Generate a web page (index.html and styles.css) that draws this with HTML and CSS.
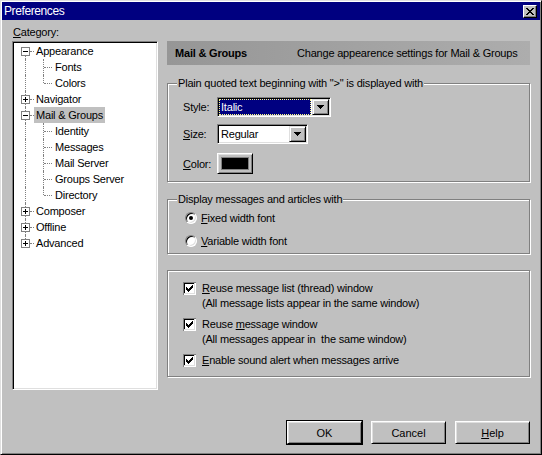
FILE: index.html
```html
<!DOCTYPE html>
<html>
<head>
<meta charset="utf-8">
<title>Preferences</title>
<link rel="stylesheet" href="styles.css">
</head>
<body>
<div class="window">
  <div class="titlebar">
    <span class="title">Preferences</span>
    <span class="close"><svg width="8" height="7" viewBox="0 0 8 7"><path d="M0 0h2v1H0z M6 0h2v1H6z M1 1h2v1H1z M5 1h2v1H5z M2 2h4v1H2z M3 3h2v1H3z M2 4h4v1H2z M1 5h2v1H1z M5 5h2v1H5z M0 6h2v1H0z M6 6h2v1H6z" fill="#000"/></svg></span>
  </div>
  <div class="main">
    <div class="left">
      <div class="cat-label"><u>C</u>ategory:</div>
      <div class="tree">
        <div class="row l0"><i class="vr first"></i><i class="hr"></i><svg class="box" width="9" height="9"><rect x="0.5" y="0.5" width="8" height="8" fill="#fff" stroke="#808080"/><path d="M2 4h5v1H2z" fill="#000"/></svg><span class="lbl">Appearance</span></div>
        <div class="row l1"><i class="vr"></i><i class="vc"></i><i class="hc"></i><span class="lbl">Fonts</span></div>
        <div class="row l1"><i class="vr"></i><i class="vc last"></i><i class="hc"></i><span class="lbl">Colors</span></div>
        <div class="row l0"><i class="vr"></i><i class="hr"></i><svg class="box" width="9" height="9"><rect x="0.5" y="0.5" width="8" height="8" fill="#fff" stroke="#808080"/><path d="M2 4h5v1H2z M4 2h1v5H4z" fill="#000"/></svg><span class="lbl">Navigator</span></div>
        <div class="row l0"><i class="vr"></i><i class="hr"></i><svg class="box" width="9" height="9"><rect x="0.5" y="0.5" width="8" height="8" fill="#fff" stroke="#808080"/><path d="M2 4h5v1H2z" fill="#000"/></svg><span class="lbl sel">Mail &amp; Groups</span></div>
        <div class="row l1"><i class="vr"></i><i class="vc"></i><i class="hc"></i><span class="lbl">Identity</span></div>
        <div class="row l1"><i class="vr"></i><i class="vc"></i><i class="hc"></i><span class="lbl">Messages</span></div>
        <div class="row l1"><i class="vr"></i><i class="vc"></i><i class="hc"></i><span class="lbl">Mail Server</span></div>
        <div class="row l1"><i class="vr"></i><i class="vc"></i><i class="hc"></i><span class="lbl">Groups Server</span></div>
        <div class="row l1"><i class="vr"></i><i class="vc last"></i><i class="hc"></i><span class="lbl">Directory</span></div>
        <div class="row l0"><i class="vr"></i><i class="hr"></i><svg class="box" width="9" height="9"><rect x="0.5" y="0.5" width="8" height="8" fill="#fff" stroke="#808080"/><path d="M2 4h5v1H2z M4 2h1v5H4z" fill="#000"/></svg><span class="lbl">Composer</span></div>
        <div class="row l0"><i class="vr"></i><i class="hr"></i><svg class="box" width="9" height="9"><rect x="0.5" y="0.5" width="8" height="8" fill="#fff" stroke="#808080"/><path d="M2 4h5v1H2z M4 2h1v5H4z" fill="#000"/></svg><span class="lbl">Offline</span></div>
        <div class="row l0"><i class="vr last"></i><i class="hr"></i><svg class="box" width="9" height="9"><rect x="0.5" y="0.5" width="8" height="8" fill="#fff" stroke="#808080"/><path d="M2 4h5v1H2z M4 2h1v5H4z" fill="#000"/></svg><span class="lbl">Advanced</span></div>
      </div>
    </div>
    <div class="right">
      <div class="header">
        <span class="h-title">Mail &amp; Groups</span>
        <span class="h-desc">Change appearence settings for Mail &amp; Groups</span>
      </div>

      <div class="group g1">
        <div class="legend">Plain quoted text beginning with "&gt;" is displayed with</div>
        <div class="frow r1">
          <span class="flabel">Style:</span>
          <div class="select w-style">
            <span class="value hl"><span class="focus">Italic</span></span>
            <span class="drop"><svg width="7" height="4" viewBox="0 0 7 4"><path d="M0 0h7v1H6v1H5v1H4v1H3V3H2V2H1V1H0z" fill="#000"/></svg></span>
          </div>
        </div>
        <div class="frow r2">
          <span class="flabel"><u>S</u>ize:</span>
          <div class="select w-size">
            <span class="value">Regular</span>
            <span class="drop"><svg width="7" height="4" viewBox="0 0 7 4"><path d="M0 0h7v1H6v1H5v1H4v1H3V3H2V2H1V1H0z" fill="#000"/></svg></span>
          </div>
        </div>
        <div class="frow r3">
          <span class="flabel"><u>C</u>olor:</span>
          <span class="colorbtn"><span class="swatch"></span></span>
        </div>
      </div>

      <div class="group g2">
        <div class="legend">Display messages and articles with</div>
        <div class="rrow first"><span class="radio on"></span><span><u>F</u>ixed width font</span></div>
        <div class="rrow"><span class="radio"></span><span><u>V</u>ariable width font</span></div>
      </div>

      <div class="group g3">
        <div class="cb">
          <svg class="check" width="13" height="13" viewBox="0 0 13 13"><rect width="13" height="13" fill="#fff"/><path d="M0 0h13v1H0z M0 0h1v13H0z" fill="#808080"/><path d="M1 1h11v1H1z M1 1h1v11H1z" fill="#000"/><path d="M1 11h11v1H1z M11 1h1v11h-1z" fill="#dfdfdf"/><path d="M3 5h1v3H3z M4 6h1v3H4z M5 7h1v3H5z M6 6h1v3H6z M7 5h1v3H7z M8 4h1v3H8z M9 3h1v3H9z" fill="#000"/></svg>
          <div class="cbtext"><u>R</u>euse message list (thread) window<br>(All message lists appear in the same window)</div>
        </div>
        <div class="cb">
          <svg class="check" width="13" height="13" viewBox="0 0 13 13"><rect width="13" height="13" fill="#fff"/><path d="M0 0h13v1H0z M0 0h1v13H0z" fill="#808080"/><path d="M1 1h11v1H1z M1 1h1v11H1z" fill="#000"/><path d="M1 11h11v1H1z M11 1h1v11h-1z" fill="#dfdfdf"/><path d="M3 5h1v3H3z M4 6h1v3H4z M5 7h1v3H5z M6 6h1v3H6z M7 5h1v3H7z M8 4h1v3H8z M9 3h1v3H9z" fill="#000"/></svg>
          <div class="cbtext">Reuse <u>m</u>essage window<br>(All messages appear in&nbsp; the same window)</div>
        </div>
        <div class="cb">
          <svg class="check" width="13" height="13" viewBox="0 0 13 13"><rect width="13" height="13" fill="#fff"/><path d="M0 0h13v1H0z M0 0h1v13H0z" fill="#808080"/><path d="M1 1h11v1H1z M1 1h1v11H1z" fill="#000"/><path d="M1 11h11v1H1z M11 1h1v11h-1z" fill="#dfdfdf"/><path d="M3 5h1v3H3z M4 6h1v3H4z M5 7h1v3H5z M6 6h1v3H6z M7 5h1v3H7z M8 4h1v3H8z M9 3h1v3H9z" fill="#000"/></svg>
          <div class="cbtext"><u>E</u>nable sound alert when messages arrive</div>
        </div>
      </div>
    </div>
  </div>
  <div class="buttons">
    <span class="btn default">OK</span>
    <span class="btn">Cancel</span>
    <span class="btn"><span><u>H</u>elp</span></span>
  </div>
</div>
</body>
</html>
```

FILE: styles.css
```css
* { box-sizing: border-box; }

body {
  margin: 0;
  background: #c0c0c0;
  font: 11px/14px "Liberation Sans", Arial, sans-serif;
  letter-spacing: -0.2px;
  color: #000;
}

u { text-decoration: underline; text-underline-offset: 1px; }

.window {
  width: 542px;
  height: 455px;
  background: #c0c0c0;
  border: 1px solid;
  border-color: #dfdfdf #000 #000 #dfdfdf;
  box-shadow: inset 1px 1px 0 #fff, inset -1px -1px 0 #808080;
  padding: 1px;
  display: flex;
  flex-direction: column;
}

/* title bar */
.titlebar {
  height: 18px;
  background: #000080;
  color: #fff;
  display: flex;
  align-items: center;
  padding: 0 3px 0 2px;
}
.title {
  flex: 1;
  font-size: 12px;
  letter-spacing: -0.4px;
}
.close {
  width: 14px;
  height: 13px;
  background: #c0c0c0;
  border: 1px solid;
  border-color: #fff #000 #000 #fff;
  box-shadow: inset -1px -1px 0 #808080;
  display: flex;
  align-items: center;
  justify-content: center;
  padding-right: 1px;
}
.close svg { display: block; }

/* main area */
.main {
  display: flex;
  padding-left: 10px;
}
.left { width: 146px; }
.cat-label {
  height: 21px;
  padding: 5px 0 0 1px;
  line-height: 14px;
}
.tree {
  height: 349px;
  background: #fff;
  border: 1px solid;
  border-color: #808080 #fff #fff #808080;
  box-shadow: inset 1px 1px 0 #000, inset -1px -1px 0 #dfdfdf;
  padding-top: 1px;
}
.row {
  position: relative;
  height: 16px;
  line-height: 16px;
}
.row i { position: absolute; display: block; }
.vr {
  left: 12px;
  top: 0;
  height: 16px;
  border-left: 1px dotted #808080;
}
.vr.first { top: 8px; height: 8px; }
.vr.last { height: 8px; }
.hr {
  left: 17px;
  top: 8px;
  width: 4px;
  border-top: 1px dotted #808080;
}
.vc {
  left: 30px;
  top: 0;
  height: 16px;
  border-left: 1px dotted #808080;
}
.vc.last { height: 8px; }
.hc {
  left: 31px;
  top: 8px;
  width: 8px;
  border-top: 1px dotted #808080;
}
.box {
  position: absolute;
  left: 8px;
  top: 4px;
  display: block;
}
.lbl {
  display: inline-block;
  padding: 0 2px;
  height: 16px;
  line-height: 16px;
}
.l0 .lbl { margin-left: 21px; }
.l1 .lbl { margin-left: 40px; }
.lbl.sel { background: #c0c0c0; }

.right {
  width: 364px;
  margin-left: 9px;
  padding-top: 21px;
}
.header {
  height: 24px;
  width: 363px;
  display: flex;
  align-items: center;
  background: linear-gradient(to right, #969696, #adadad);
}
.h-title {
  width: 130px;
  padding-left: 8px;
  font-weight: bold;
  flex: none;
}

/* group boxes */
.group {
  width: 363px;
  border: 1px solid #808080;
  box-shadow: 1px 1px 0 #fff, inset 1px 1px 0 #fff;
}
.legend {
  display: block;
  width: fit-content;
  margin: -8px 0 0 9px;
  padding: 0 1px;
  background: #c0c0c0;
  line-height: 14px;
  height: 14px;
}
.g1 { margin-top: 18px; height: 99px; }
.g2 { margin-top: 17px; height: 55px; }
.g3 { margin-top: 16px; height: 107px; padding-top: 10px; }

.frow {
  display: flex;
  align-items: center;
  padding-left: 15px;
}
.frow.r1 { margin-top: 7px; }
.frow.r2 { margin-top: 7px; }
.frow.r3 { margin-top: 9px; }
.flabel { width: 34px; flex: none; }

.select {
  height: 20px;
  background: #fff;
  border: 1px solid;
  border-color: #808080 #fff #fff #808080;
  box-shadow: inset 1px 1px 0 #000, inset -1px -1px 0 #dfdfdf;
  padding: 1px;
  display: flex;
}
.w-style { width: 114px; }
.w-size { width: 91px; }
.value {
  flex: 1;
  line-height: 16px;
  padding-left: 2px;
  margin-right: 1px;
}
.value.hl {
  background: #000080;
  color: #fff;
  padding: 0;
}
.focus {
  display: block;
  height: 16px;
  line-height: 14px;
  border: 1px dotted #ffff80;
  padding-left: 1px;
}
.drop {
  width: 17px;
  height: 16px;
  background: #c0c0c0;
  border: 1px solid;
  border-color: #dfdfdf #000 #000 #dfdfdf;
  box-shadow: inset 1px 1px 0 #fff, inset -1px -1px 0 #808080;
  display: flex;
  align-items: center;
  justify-content: center;
  flex: none;
}
.drop svg { display: block; }

.colorbtn {
  width: 36px;
  height: 21px;
  border: 1px solid;
  border-color: #fff #000 #000 #fff;
  box-shadow: inset 1px 1px 0 #dfdfdf, inset -1px -1px 0 #808080;
  padding: 3px 3px 3px 3px;
  display: block;
}
.swatch {
  display: block;
  width: 100%;
  height: 100%;
  background: #000;
  border: 1px solid #808080;
}

/* radios */
.rrow {
  display: flex;
  align-items: center;
  height: 16px;
  padding-left: 17px;
  margin-top: 7px;
}
.rrow.first { margin-top: 4px; }
.radio {
  width: 12px;
  height: 12px;
  border-radius: 50%;
  background: #fff;
  border: 1px solid;
  border-color: #808080 #fff #fff #808080;
  box-shadow: inset 1px 1px 0 #000, inset -1px -1px 0 #dfdfdf;
  margin-right: 4px;
  display: flex;
  align-items: center;
  justify-content: center;
  flex: none;
}
.radio.on::after {
  content: "";
  width: 4px;
  height: 4px;
  border-radius: 50%;
  background: #000;
}

/* checkboxes */
.cb {
  display: flex;
  align-items: flex-start;
  padding-left: 15px;
}
.cb + .cb { margin-top: 6px; }
.check {
  display: block;
  flex: none;
  margin-top: 1px;
  margin-right: 6px;
}
.cbtext { line-height: 15px; }

/* buttons */
.buttons {
  margin-top: auto;
  display: flex;
  justify-content: flex-end;
  gap: 9px;
  padding: 0 10px 9px 0;
}
.btn {
  width: 75px;
  height: 23px;
  border: 1px solid;
  border-color: #fff #000 #000 #fff;
  box-shadow: inset 1px 1px 0 #dfdfdf, inset -1px -1px 0 #808080;
  display: flex;
  align-items: center;
  justify-content: center;
  letter-spacing: 0;
}
.btn.default {
  box-shadow: 0 0 0 1px #000, inset 1px 1px 0 #dfdfdf, inset -1px -1px 0 #808080;
}
```
